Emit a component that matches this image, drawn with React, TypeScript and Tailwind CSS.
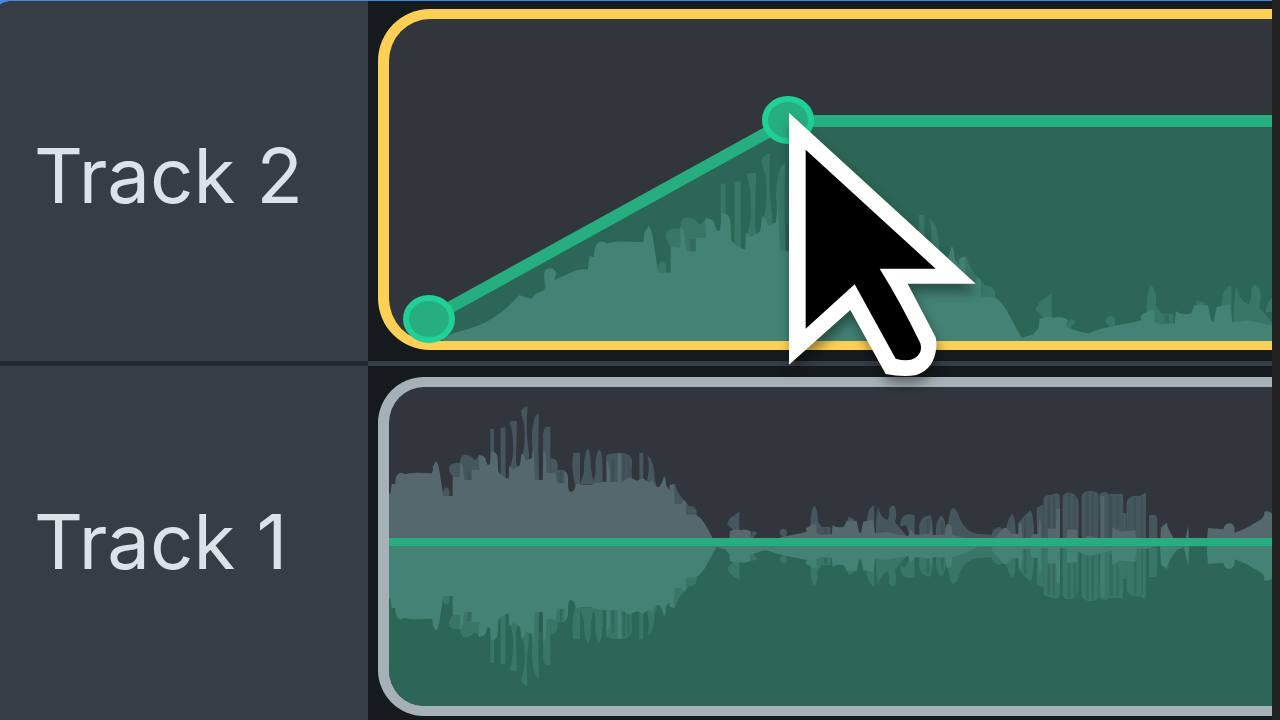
import React from "react";

// one half of the waveform, the centre line is y = 0
const BODY =
  "M-296,0 L-273,-13 Q-235,-22 -205,-35 Q-160,-58 -123,-99 Q-105,-92 -96,-91 L-85,-103 Q-66,-108 -64,-118 Q-72,-150 -62,-158 Q-45,-164 -40,-148 L-44,-133 L0,-153 Q15,-159 31,-157 L35,-187 L45,-185 Q46,-222 65,-220 L75,-215 Q85,-220 110,-220 L155,-218 Q160,-225 158,-238 L168,-255 Q174,-250 178,-228 L190,-150 H218 V-208 L240,-206 V-253 Q252,-240 250,-222 L254,-198 H275 V-228 H298 L296,-273 Q318,-272 318,-255 L323,-243 L330,-246 L333,-283 Q350,-285 353,-265 L355,-223 Q368,-206 386,-202 L388,-240 L400,-230 L420,-243 L425,-278 Q434,-272 437,-256 L455,-263 L460,-303 L465,-198 H488 L490,-288 Q499,-280 498,-260 L500,-220 H522 L525,-228 L532,-188 H553 V-226 Q566,-218 564,-195 Q564,-160 573,-162 Q587,-166 587,-188 Q610,-180 635,-184 Q650,-192 680,-193 V-258 Q692,-245 690,-192 H712 L714,-278 H724 V-192 L748,-206 L770,-196 L790,-203 L808,-188 L815,-200 Q822,-180 835,-176 Q846,-182 852,-210 Q858,-205 858,-183 L868,-168 L870,-183 L882,-186 L884,-126 H905 L910,-138 L918,-133 V-94 H948 Q967,-85 985,-48 Q1000,-20 1010,-3 L1035,-10 L1048,-25 L1050,-45 Q1070,-53 1080,-48 Q1103,-53 1115,-42 L1110,-28 Q1140,-14 1160,-13 L1185,-22 L1220,-30 L1262,-38 L1280,-43 L1278,-53 L1300,-66 L1310,-64 V-38 L1325,-33 L1355,-35 L1358,-63 Q1370,-52 1392,-58 L1400,-76 H1430 L1437,-43 L1443,-38 L1450,-73 L1480,-78 L1485,-38 L1520,-42 L1560,-34 L1585,-30 L1592,-52 L1605,-34 L1650,-37 V-60 L1658,-34 L1695,-34 L1700,-67 L1715,-62 L1717,-34 Q1750,-28 1790,-4 L1835,0 L1838,-17 L1850,-30 L1870,-53 L1880,-55 L1895,-37 H1915 L1918,-72 L1925,-62 L1928,-10 H1950 L1955,-34 L1975,-37 L1978,-82 L1983,-72 V-6 H2003 L2004,-52 H2028 L2030,-112 H2040 V-6 H2060 L2062,-50 L2092,-48 V-17 L2130,-30 L2162,-22 L2195,-14 L2198,-57 Q2215,-42 2230,-44 L2265,-47 L2270,-8 H2300 L2340,0 L2343,-55 L2360,-70 Q2365,-45 2390,-12 L2412,-4 L2425,-60 L2428,0 H2480 L2484,-54 L2530,-50 Q2535,-70 2550,-68 Q2568,-64 2563,-40 Q2600,-52 2620,-67 Q2660,-85 2652,-102 Q2665,-108 2675,-98 L2720,-90 L2760,0 Z";

// peaks that stick out behind the body
const PEAKS = [
  "M188,-150 Q190,-178 200,-176 Q212,-170 208,-150Z",
  "M225,-200 Q200,-225 210,-242 Q222,-254 240,-248 L242,-265 Q252,-280 265,-272 L275,-268 L284,-258 L300,-272 L320,-230 V-150 H225Z",
  "M331,-351 H342 V-150 H331Z",
  "M362,-354 L376,-356 L377,-150 H362Z",
  "M389,-372 Q396,-376 411,-374 L408,-255 L415,-225 H385 Q403,-260 399,-310 Q398,-345 389,-372Z",
  "M424,-408 Q434,-418 443,-420 Q436,-350 447,-280 V-240 H420 Q440,-300 432,-370 Q422,-395 424,-408Z",
  "M477,-398 Q465,-395 460,-365 Q452,-330 458,-290 V-150 H480 Q472,-280 477,-398Z",
  "M511,-358 H497 Q486,-340 490,-320 L489,-290 V-150 H511Z",
  "M511,-263 Q530,-265 533,-245 V-180 H511Z",
  "M530,-228 H554 V-180 H530Z",
  "M580,-280 H600 V-185 H585 Q572,-235 580,-280Z",
  "M598,-185 Q608,-200 612,-225 Q612,-280 624,-293 Q633,-280 633,-230 L640,-195 Q650,-215 646,-245 Q648,-282 658,-290 Q667,-280 668,-240 V-185Z",
  "M678,-270 Q690,-280 714,-278 H724 Q756,-278 757,-250 Q752,-225 758,-190 H680Z",
  "M778,-280 H790 V-190 H778Z",
  "M802,-272 Q822,-258 824,-205 L830,-180 L800,-190 Q812,-240 802,-272Z",
  "M868,-180 L885,-186 Q894,-155 912,-138 L928,-120 Q945,-122 950,-105 V-90 H880Z",
  "M1041,-66 L1050,-83 L1078,-103 V-48 H1060Z",
  "M1198,-42 Q1205,-56 1218,-50 Q1226,-35 1214,-26 Q1202,-28 1198,-42Z",
  "M1110,-28 L1120,-45 L1132,-40 L1118,-22Z",
  "M1292,-50 Q1290,-110 1303,-121 Q1316,-105 1313,-75 L1325,-57 H1352 V-20 H1292Z",
  "M1404,-76 V-88 L1422,-82 V-70Z",
  "M1461,-70 Q1460,-115 1483,-122 V-30 H1462Z",
  "M1488,-72 L1494,-121 Q1500,-85 1522,-78 Q1530,-90 1527,-110 Q1535,-128 1545,-118 Q1553,-95 1545,-72 L1580,-30 H1488Z",
  "M1560,-60 Q1562,-97 1590,-95 L1604,-92 V-30 H1590 L1578,-62Z",
  "M1617,-60 Q1620,-90 1652,-92 Q1662,-60 1657,-25 H1620Z",
  "M1668,-30 Q1665,-78 1685,-92 Q1700,-75 1698,-30Z",
  "M1704,-60 Q1708,-112 1720,-114 Q1732,-110 1740,-80 Q1758,-42 1790,-37 L1840,-34 L1840,0 H1704Z",
  "M1836,-38 Q1838,-52 1848,-52 Q1856,-64 1868,-50 V-20 H1838Z",
  "M1878,-50 Q1886,-88 1897,-97 Q1908,-85 1907,-30 H1880Z",
  "M1914,-65 Q1925,-85 1952,-107 Q1962,-90 1964,-10 H1916Z",
  "M1970,-115 L1991,-125 V-5 H1972Z",
  "M1991,-145 Q2000,-155 2012,-152 Q2038,-168 2040,-145 V-5 H1991Z",
  "M2048,-145 Q2050,-160 2065,-160 Q2092,-160 2096,-130 V-5 H2048Z",
  "M2105,-150 Q2110,-165 2130,-165 Q2156,-165 2156,-150 V-5 H2105Z",
  "M2158,-154 Q2165,-164 2176,-162 Q2187,-158 2188,-152 V-5 H2160Z",
  "M2188,-156 L2228,-157 Q2232,-130 2229,-100 L2240,-98 V-5 H2188Z",
  "M2240,-130 Q2245,-156 2280,-150 L2298,-161 V-5 H2240Z",
  "M2307,-93 H2325 Q2332,-90 2332,-80 V-5 H2307Z",
];

// narrow darker columns over the peaks: x, top, width, bottom
const SHADES: [number, number, number, number][] = [
  [262, -225, 12, -198],
  [478, -258, 9, -200],
  [540, -225, 6, -190],
  [695, -262, 8, -194],
  [728, -272, 8, -196],
  [742, -268, 7, -205],
  [1332, -54, 10, -36],
  [1640, -82, 9, -38],
  [1684, -76, 7, -34],
  [1932, -86, 7, -12],
  [2003, -146, 7, -54],
  [2019, -148, 6, -54],
  [2064, -156, 7, -50],
  [2082, -150, 6, -48],
  [2119, -160, 7, -30],
  [2136, -160, 6, -30],
  [2190, -150, 9, -22],
  [2210, -152, 6, -56],
  [2262, -145, 7, -48],
  [2284, -146, 5, -10],
];

type WaveProps = { transform: string; body: string; peak: string };

function Wave({ transform, body, peak }: WaveProps) {
  return (
    <g transform={transform}>
      {PEAKS.map((d, i) => (
        <path key={i} d={d} fill={peak} />
      ))}
      {SHADES.map(([x, top, w, bottom], i) => (
        <rect key={i} x={x} y={top} width={w} height={bottom - top} fill="#1f3d3c" opacity={0.2} />
      ))}
      <rect x={2162} y={-150} width={12} height={140} fill={body} opacity={0.8} />
      <path d={BODY} fill={body} />
      <rect x={-296} y={-1} width={3056} height={6} fill={body} />
    </g>
  );
}

function Handle({ cx, cy }: { cx: number; cy: number }) {
  return <ellipse cx={cx} cy={cy} rx={23} ry={21} fill="#26ae80" stroke="#20d197" strokeWidth={6} />;
}

function FadeClip() {
  return (
    <div className="rounded-l-[52px] border-t-10 border-b-9 border-l-11 border-[#ffd055] bg-[#31353c]">
      <svg className="block h-[322px] w-full overflow-visible" aria-label="Track 2 clip with fade in">
        <svg width="100%" height="322">
          <path d="M40,322 V300 L399,101 V322Z" fill="#2c6656" />
          <rect x={398} y={101} width="100%" height={221} fill="#2c6656" />
          <Wave transform="translate(185 320) scale(0.4433)" body="#438274" peak="#397667" />
          <rect x={399} y={96} width="100%" height={12} fill="#26ae80" />
        </svg>
        <path d="M40,300 L399,102" stroke="#26ae80" strokeWidth={12} />
        <Handle cx={40} cy={300} />
        <Handle cx={399} cy={101} />
      </svg>
    </div>
  );
}

function PlainClip() {
  return (
    <div className="overflow-hidden rounded-l-[46px] border-y-10 border-l-11 border-[#a6b1b7] bg-[#31353c]">
      <svg className="block h-[319px] w-full" aria-label="Track 1 clip">
        <Wave transform="translate(-9 159) scale(0.3333)" body="#54686d" peak="#46565d" />
        <rect y={158} width="100%" height={161} fill="#2c6656" />
        <Wave transform="translate(-9 159) scale(0.3333 -0.3333)" body="#438274" peak="#397667" />
        <rect y={151} width="100%" height={8} fill="#26ae80" />
      </svg>
    </div>
  );
}

function Cursor() {
  return (
    <svg
      className="absolute top-[111px] left-[421px] z-10 h-[266px] w-[188px] overflow-visible drop-shadow-[2px_8px_6px_rgba(0,0,0,0.4)]"
      viewBox="448 96 564 798"
      aria-hidden="true"
    >
      <path
        fill="#fff"
        d="M448,98 L1008,611 H804 L888,772 Q891,785 890,802 Q884,868 830,885 Q790,892 738,882 L632,690 L448,854Z"
      />
      <path d="M498,209 L888,566 H720 Q786,672 842,790 Q850,818 826,834 Q806,846 768,836 L645,613 L498,746Z" />
    </svg>
  );
}

function TrackLabel({ name }: { name: string }) {
  return <h2 className="font-['Inter',sans-serif] text-[76px] leading-[90px] text-[#dbe2e8]">{name}</h2>;
}

export default function App() {
  return (
    <div className="flex min-h-screen bg-[#4a88da]">
      <main className="mt-px flex-1 overflow-hidden rounded-tl-[16px_5px] bg-[#151b1d]">
        <section className="flex">
          <div className="flex w-[368px] shrink-0 items-center bg-[#363d45] pb-3 pl-[34px]">
            <TrackLabel name="Track 2" />
          </div>
          <div className="relative min-w-0 flex-1 pt-2 pb-[11px] pl-2.5">
            <FadeClip />
            <Cursor />
          </div>
        </section>
        <section className="flex">
          <div className="flex w-[368px] shrink-0 items-center border-t-5 border-[#24282f] bg-[#363d45] pb-1 pl-[34px]">
            <TrackLabel name="Track 1" />
          </div>
          <div className="min-w-0 flex-1 border-t-5 border-[#373d46] pt-[11px] pb-1 pl-2.5">
            <PlainClip />
          </div>
        </section>
      </main>
      <aside className="w-2 shrink-0 bg-[#222222]" />
    </div>
  );
}
